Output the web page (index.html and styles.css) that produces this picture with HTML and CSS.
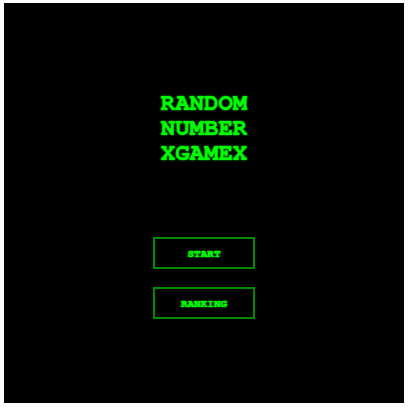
FILE: index.html
```html
<!DOCTYPE html>
<html>
<head>
<meta charset="utf-8">
<link rel="stylesheet" href="styles.css">
</head>
<body>
<div class="screen">
  <h1 class="title">RANDOM<br>NUMBER<br>XGAMEX</h1>
  <div class="menu">
    <button class="btn">START</button>
    <button class="btn">RANKING</button>
  </div>
</div>
</body>
</html>
```
FILE: styles.css
```css
html, body {
  margin: 0;
  padding: 0;
  background: #ffffff;
}
body {
  padding: 3px 4px;
}
.screen {
  width: 400px;
  height: 400px;
  background: #000000;
  display: flex;
  flex-direction: column;
  align-items: center;
  font-family: "FreeMono", "Liberation Mono", monospace;
}
.title {
  margin: 88px 0 0 0;
  font-size: 24px;
  line-height: 25px;
  font-weight: bold;
  color: #00ff00;
  text-align: center;
  text-shadow: 0 0 2px #00ff00;
}
.menu {
  margin-top: 71px;
  display: flex;
  flex-direction: column;
  gap: 18px;
}
.btn {
  width: 102px;
  height: 32px;
  background: #000000;
  border: 2px solid #008a00;
  color: #00ff00;
  font-family: "FreeMono", "Liberation Mono", monospace;
  font-size: 11px;
  font-weight: bold;
  padding: 0;
  text-shadow: 0 0 2px #00ff00, 0 0 1px #00ff00;
}
```
